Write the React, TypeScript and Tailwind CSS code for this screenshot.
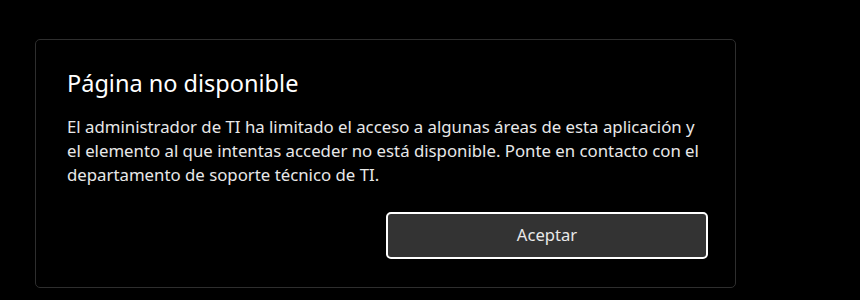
import React from "react";

const App: React.FC = () => {
  return (
    <div
      className="w-[860px] h-[300px] bg-black pt-[39px] pl-[35px]"
      style={{ fontFamily: '"Noto Sans", "Open Sans", sans-serif' }}
    >
      <div className="w-[701px] h-[249px] border border-[#2e2e2e] rounded-[5px] bg-black pl-[31px] pr-[27px] pt-[28px] flex flex-col">
        <h1 className="text-[23.5px] leading-[30px] text-white">
          Página no disponible
        </h1>
        <p className="mt-[17px] text-[16.8px] leading-[24px] text-[#e8e8e8]">
          El administrador de TI ha limitado el acceso a algunas áreas de esta
          aplicación y el elemento al que intentas acceder no está disponible.
          Ponte en contacto con el departamento de soporte técnico de TI.
        </p>
        <div className="flex justify-end mt-[25px]">
          <button className="w-[322px] h-[47px] rounded-[5px] border-2 border-white bg-[#333333] text-[16.6px] text-[#e8e8e8]">
            Aceptar
          </button>
        </div>
      </div>
    </div>
  );
};

export default App;
